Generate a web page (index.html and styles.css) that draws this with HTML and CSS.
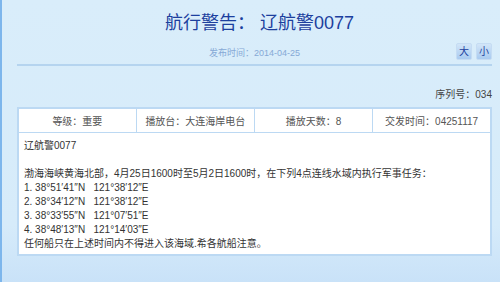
FILE: index.html
```html
<!DOCTYPE html>
<html lang="zh">
<head>
    <meta charset="UTF-8" />
    <link rel="stylesheet" href="styles.css">
    <title>航行警告</title>
</head>
<body>
    <div class="page">
        <h1 class="title">航行警告： 辽航警0077</h1>
        <div class="meta">
            <span class="date">发布时间：2014-04-25</span>
            <div class="size-btns">
                <button class="size-btn">大</button>
                <button class="size-btn">小</button>
            </div>
        </div>
        <div class="serial">序列号：034</div>
        <table class="warn">
            <tr class="info-row">
                <td>等级：重要</td>
                <td>播放台：大连海岸电台</td>
                <td>播放天数：8</td>
                <td>交发时间：04251117</td>
            </tr>
            <tr>
                <td colspan="4" class="body-cell">
                    辽航警0077<br><br>
                    渤海海峡黄海北部，4月25日1600时至5月2日1600时，在下列4点连线水域内执行军事任务：<br>
                    1. 38°51′41″N&nbsp;&nbsp;&nbsp;121°38′12″E<br>
                    2. 38°34′12″N&nbsp;&nbsp;&nbsp;121°38′12″E<br>
                    3. 38°33′55″N&nbsp;&nbsp;&nbsp;121°07′51″E<br>
                    4. 38°48′13″N&nbsp;&nbsp;&nbsp;121°14′03″E<br>
                    任何船只在上述时间内不得进入该海域.希各航船注意。
                </td>
            </tr>
        </table>
    </div>
</body>
</html>
```

FILE: styles.css
```css
* {
    box-sizing: border-box;
}

html, body {
    margin: 0;
    height: 100%;
}

body {
    font-family: "Liberation Sans", "Noto Sans CJK SC", sans-serif;
    color: #333;
    background: linear-gradient(#d9edfa, #d6ebfa 80%, #c9e2f8);
    border-left: 2px solid #7db6ec;
}

.page {
    padding: 0 8px 0 15px;
}

.title {
    margin: 0;
    padding-top: 12px;
    padding-left: 10px;
    font-size: 18px;
    font-weight: normal;
    color: #1c3f9e;
    text-align: center;
    line-height: 22px;
}

.meta {
    position: relative;
    height: 32px;
    border-bottom: 2px solid #b5d4ef;
    text-align: center;
}

.date {
    display: inline-block;
    margin-top: 12px;
    font-size: 9px;
    color: #86a9d6;
}

.size-btns {
    position: absolute;
    right: 0;
    top: 9px;
    display: flex;
    gap: 4px;
}

.size-btn {
    width: 16px;
    height: 17px;
    padding: 0;
    border: 1px solid #c5dcf3;
    border-radius: 2px;
    background: linear-gradient(#d2e5f8, #a9cbf0);
    color: #1c3f9e;
    font-size: 10px;
    font-family: inherit;
    line-height: 15px;
}

.serial {
    margin-top: 22px;
    text-align: right;
    font-size: 10px;
    color: #444;
    line-height: 14px;
}

.warn {
    width: 100%;
    margin-top: 5px;
    border-collapse: collapse;
    border: 2px solid #bcd9f3;
    background: #fff;
    font-size: 10px;
    table-layout: fixed;
}

.warn td {
    border: 1px solid #bcd9f3;
}

.info-row td {
    height: 24px;
    text-align: center;
    color: #555;
}

.body-cell {
    padding: 6px 5px 3px;
    line-height: 14px;
    color: #333;
}
```
